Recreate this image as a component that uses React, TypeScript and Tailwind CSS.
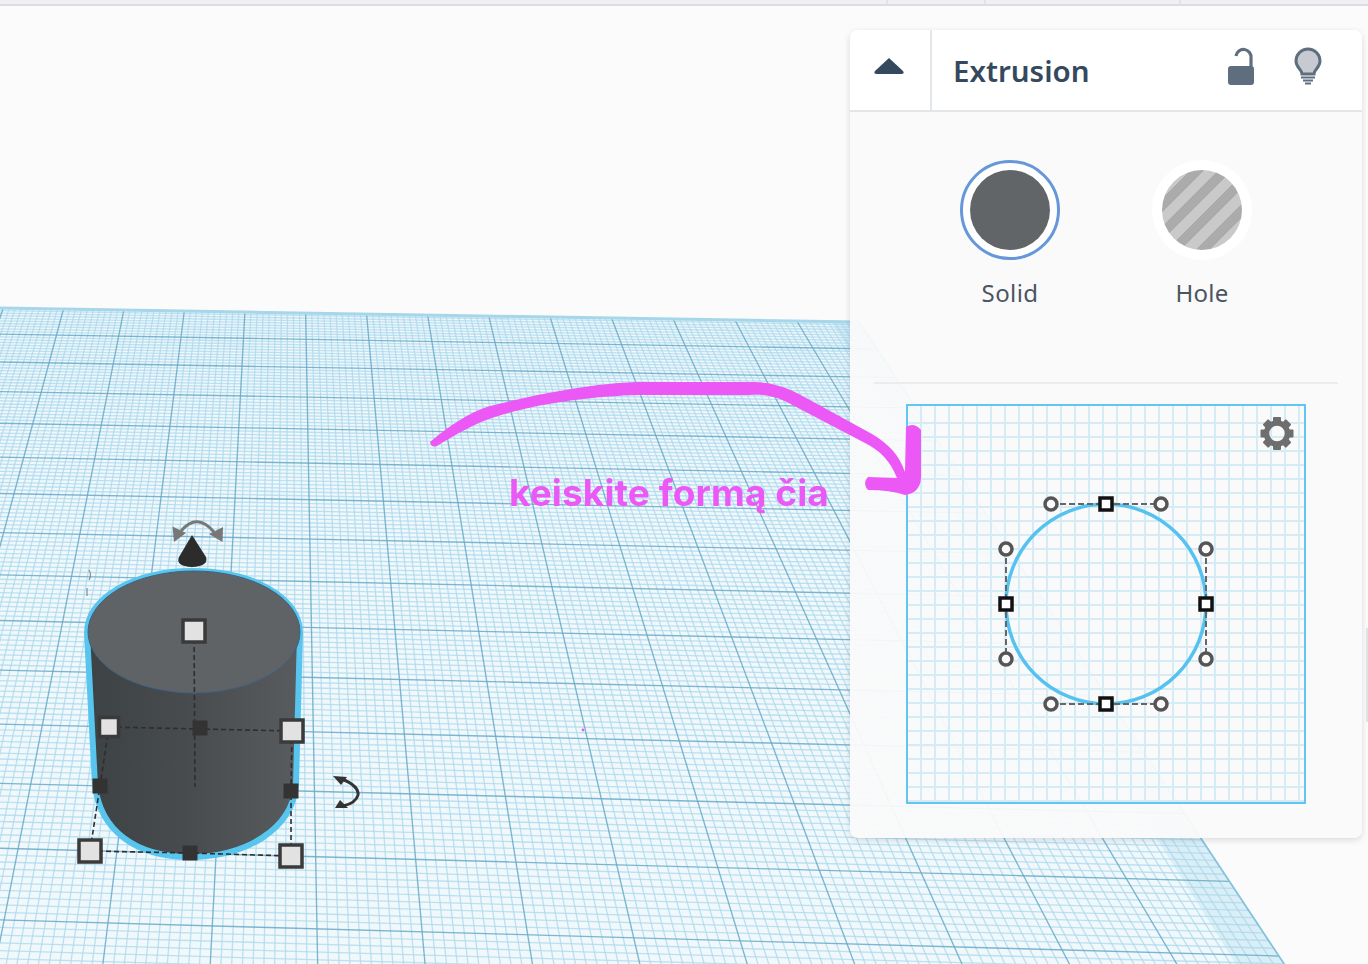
import React from 'react'

// workplane perspective, fitted to the screenshot
const HORIZON = -537
const VP_X = 290
const LEFT_VP = 51500
const EDGE = 851

const depth = (v: number) => 1 / (1.1834e-3 - 3.55e-5 * v) + HORIZON

function vLine(k: number) {
  const x310 = 245 + 60.6 * k
  const s = (x310 - VP_X) / (310 - HORIZON)
  const x1 = (VP_X + s * (308 - HORIZON)) / (1 - s * 0.0163)
  const y1 = 308 + 0.0163 * x1
  return { x1, y1, x2: VP_X + s * (980 - HORIZON), y2: 980 }
}

function hLine(v: number) {
  const y = depth(v)
  const m = (y - HORIZON) / LEFT_VP
  const e = (EDGE - VP_X) / (310 - HORIZON)
  const x2 = (VP_X + e * (y - HORIZON)) / (1 - e * m)
  return { x1: 0, y1: y, x2, y2: y + m * x2 }
}

function Workplane() {
  const minorV: React.ReactNode[] = []
  const majorV: React.ReactNode[] = []
  for (let i = -60; i <= 100; i++) {
    const l = vLine(i / 10)
    if (i % 10 === 0) majorV.push(<line key={i} {...l} />)
    else minorV.push(<line key={i} {...l} />)
  }
  const minorH: React.ReactNode[] = []
  const majorH: React.ReactNode[] = []
  for (let i = 0; i <= 150; i++) {
    const l = hLine(i / 10)
    if (i % 10 === 0) majorH.push(<line key={i} {...l} />)
    else minorH.push(<line key={i} {...l} />)
  }
  const edgeTop = hLine(0)
  const a = vLine(9.55)
  const b = vLine(10)
  return (
    <svg viewBox="0 6 1368 958" className="absolute inset-0 h-full w-full blur-[0.7px]">
      <polygon points={`0,308 ${edgeTop.x2},${edgeTop.y2} ${b.x2},980 0,980`} fill="#f0f8fb" />
      <g stroke="#aedaed" strokeWidth="1.3" strokeOpacity="0.8">
        {minorV}
        {minorH}
      </g>
      <polygon points={`${a.x1},${a.y1} ${b.x1},${b.y1} ${b.x2},980 ${a.x2},980`} fill="#a9d7ea" fillOpacity="0.3" />
      <g stroke="#66a9c8" strokeWidth="1.35" strokeOpacity="0.85">
        {majorV}
        {majorH}
      </g>
      <line {...edgeTop} stroke="#a6d6ea" strokeWidth="3" />
      <line {...b} stroke="#86c6e0" strokeWidth="1.5" />
    </svg>
  )
}

function WhiteHandle({ x, y, size = 22 }: { x: number; y: number; size?: number }) {
  return (
    <rect x={x - size / 2} y={y - size / 2} width={size} height={size} fill="#e2e2e2" stroke="#3a3a3a" strokeWidth="3.5" />
  )
}

function DarkHandle({ x, y }: { x: number; y: number }) {
  return <rect x={x - 7.5} y={y - 7.5} width={15} height={15} fill="#333" />
}

function Cylinder() {
  return (
    <svg viewBox="0 6 1368 958" className="absolute inset-0 h-full w-full blur-[0.6px]">
      <defs>
        <linearGradient id="body" x1="0" x2="1" y1="0" y2="0">
          <stop offset="0" stopColor="#3d4245" />
          <stop offset="0.45" stopColor="#474b4e" />
          <stop offset="1" stopColor="#585c5f" />
        </linearGradient>
      </defs>
      <path
        d="M87,633 C87,597 135,571 193,571 C252,571 300,597 300,633 L296,785 C292,830 245,857 190,857 C135,857 100,830 95,785 Z"
        fill="url(#body)"
        stroke="#58c5ee"
        strokeWidth="6"
      />
      <ellipse cx="194" cy="632" rx="106" ry="61" fill="#5f6366" stroke="#3f6080" strokeWidth="1" />
      <g stroke="#2e2e2e" strokeWidth="1.6" strokeDasharray="5 3" fill="none">
        <path d="M194,631 L195,787" />
        <path d="M109,727 L292,731" />
        <path d="M109,727 L100,786 L90,851" />
        <path d="M292,731 L291,791 L291,856" />
        <path d="M90,851 L190,853 L291,856" />
      </g>
      <WhiteHandle x={194} y={631} />
      <WhiteHandle x={109} y={727} size={19} />
      <WhiteHandle x={292} y={731} />
      <WhiteHandle x={90} y={851} />
      <WhiteHandle x={291} y={856} />
      <DarkHandle x={200} y={728} />
      <DarkHandle x={100} y={786} />
      <DarkHandle x={291} y={791} />
      <DarkHandle x={190} y={853} />
      <path d="M192,535 L206,557 Q209,566 192,567 Q175,566 179,557 Z" fill="#2c2c2c" />
      <path d="M181,531 Q197,512 214,532" fill="none" stroke="#777" strokeWidth="3" />
      <path d="M172.5,526.5 L186,533 L174,542 Z M223,527 L209,534 L222.5,542 Z" fill="#777" />
      <path d="M342,779 Q359,786 358,795 Q356,803 343,806" fill="none" stroke="#333" strokeWidth="3" />
      <path d="M333,776 L347,777 L341,785 Z M335,808 L340,800 L348,808 Z" fill="#333" />
      <path d="M89,570 Q92,575 89,580 M87,588 L87,596" fill="none" stroke="#888" strokeWidth="1.2" />
      <circle cx="583" cy="730" r="1.4" fill="#ec58f5" />
    </svg>
  )
}

function ProfileEditor() {
  const cols = Array.from({ length: 28 }, (_, i) => 921 + i * 14)
  const rows = Array.from({ length: 28 }, (_, i) => 423 + i * 14)
  const anchors = [
    [1106, 504],
    [1006, 604],
    [1206, 604],
    [1106, 704],
  ]
  const knobs = [
    [1051, 504],
    [1161, 504],
    [1006, 549],
    [1206, 549],
    [1006, 659],
    [1206, 659],
    [1051, 704],
    [1161, 704],
  ]
  return (
    <svg viewBox="908 406 396 396" className="block h-full w-full blur-[0.5px]">
      <g stroke="#d5ebf5" strokeWidth="2">
        {cols.map((x) => (
          <line key={x} x1={x} y1="405" x2={x} y2="803" />
        ))}
        {rows.map((y) => (
          <line key={y} x1="905" y1={y} x2="1306" y2={y} />
        ))}
      </g>
      <circle cx="1106" cy="604" r="100" fill="none" stroke="#55c2f0" strokeWidth="3.5" />
      <g stroke="#666" strokeWidth="2" strokeDasharray="6 3">
        <path d="M1051,504 H1161 M1051,704 H1161 M1006,549 V659 M1206,549 V659" />
      </g>
      {knobs.map(([x, y]) => (
        <circle key={`${x}-${y}`} cx={x} cy={y} r="6" fill="#fafafa" stroke="#555" strokeWidth="3.5" />
      ))}
      {anchors.map(([x, y]) => (
        <rect key={`${x}-${y}`} x={x - 6} y={y - 6} width={12} height={12} fill="#fff" stroke="#111" strokeWidth="3.5" />
      ))}
      <g fill="#6e6e6e">
        {[0, 45, 90, 135, 180, 225, 270, 315].map((r) => (
          <rect key={r} x="1273" y="417" width="8" height="7" rx="1" transform={`rotate(${r} 1277 433.5)`} />
        ))}
      </g>
      <circle cx="1277" cy="433.5" r="10.5" fill="none" stroke="#6e6e6e" strokeWidth="5.5" />
    </svg>
  )
}

function SidePanel() {
  return (
    <div className="absolute top-[24px] right-[6px] h-[808px] w-[512px] rounded-lg bg-[#fafafa]/95 shadow-[0_2px_6px_rgba(60,70,90,0.18)] font-['Noto_Sans',sans-serif]">
      <div className="flex h-[82px] rounded-t-lg border-b-2 border-[#e3e7ea] bg-white">
        <div className="flex w-[82px] items-center justify-center border-r-2 border-[#e3e7ea]">
          <svg width="32" height="20" viewBox="0 0 32 20" className="mb-[9px] mr-[2px]">
            <path d="M16,2 L30,15 Q32,18 28,18 L4,18 Q0,18 2,15 Z" fill="#35495e" />
          </svg>
        </div>
        <div className="flex flex-1 items-center pl-[21px] pr-[38px]">
          <span className="pt-[2px] text-[29.5px] leading-none font-semibold text-[#34495e]">Extrusion</span>
          <svg width="36" height="40" viewBox="1222 48 36 40" className="ml-auto mr-[34px] mb-[6px]">
            <rect x="1228" y="67" width="26" height="19" rx="3" fill="#5f6e7e" />
            <path d="M1236,57 A7.5,7.5 0 0 1 1251,59 L1251,68" fill="none" stroke="#5f6e7e" strokeWidth="3.2" />
          </svg>
          <svg width="32" height="42" viewBox="1292 47 32 42" className="mb-[6px]">
            <path
              d="M1302,75 C1302,70 1296,69 1296,62 A12,12 0 1 1 1320,62 C1320,69 1314,70 1314,75 Z"
              fill="#c7cbd1"
              stroke="#5f6e7e"
              strokeWidth="3"
            />
            <path d="M1301,78.5 H1315 M1303,81.5 H1313 M1305,84.5 H1311" stroke="#5f6e7e" strokeWidth="2" />
          </svg>
        </div>
      </div>

      <div className="flex gap-[92px] pl-[110px] pt-[48px]">
        <div className="flex w-[100px] flex-col items-center">
          <div className="flex h-[100px] w-[100px] items-center justify-center rounded-full border-[3px] border-[#6597d9] bg-white">
            <div className="h-[80px] w-[80px] rounded-full bg-[#616567]" />
          </div>
          <span className="mt-[16px] text-[24px] leading-[34px] tracking-[0.4px] text-[#4a5562]">Solid</span>
        </div>
        <div className="flex w-[100px] flex-col items-center">
          <div className="flex h-[100px] w-[100px] items-center justify-center rounded-full bg-white">
            <div className="h-[80px] w-[80px] rounded-full bg-[repeating-linear-gradient(135deg,#ababab_0,#ababab_10px,#c9c9c9_10px,#c9c9c9_20px)]" />
          </div>
          <span className="mt-[16px] text-[24px] leading-[34px] tracking-[0.2px] text-[#4a5562]">Hole</span>
        </div>
      </div>

      <div className="mx-[24px] mt-[72px] h-[2px] bg-[#ececec]" />

      <div className="ml-[56px] mt-[20px] h-[400px] w-[400px] border-2 border-[#63c6f2]">
        <ProfileEditor />
      </div>
    </div>
  )
}

export default function App() {
  return (
    <div className="flex h-[964px] w-[1368px] flex-col overflow-hidden bg-[#fbfbfb]">
      <div className="flex h-[6px] shrink-0 border-b-2 border-[#dcdce4] bg-[#f0f0f4]">
        <div className="w-[888px] border-r-2 border-[#e2e2e8]" />
        <div className="w-[98px] border-r-2 border-[#e2e2e8]" />
        <div className="w-[195px] border-r-2 border-[#e2e2e8]" />
      </div>
      <div className="relative flex-1">
        <Workplane />
        <Cylinder />
        <span className="absolute left-[509px] top-[462px] text-[37px] leading-[50px] font-bold tracking-[0.1px] text-[#ec58f5] font-['Inter',sans-serif] blur-[0.3px]">
          keiskite formą čia
        </span>
        <SidePanel />
        <svg viewBox="0 6 1368 958" className="pointer-events-none absolute inset-0 h-full w-full">
          <path
            d="M430,442 C450,425 470,412 490,406 C530,396 590,383 640,382 L755,382 C780,383 795,392 810,400 L872,434 C890,445 899,455 905,472 L906,427 Q914,422 921,430 L921,478 Q920,493 905,495 Q890,490 868,490 Q862,483 868,477 L897,478 C890,460 880,451 865,443 L800,409 C780,398 770,394 750,395 L640,395 C590,396 530,405 495,417 C475,423 455,435 437,446 Q431,448 430,442 Z"
            fill="#ec58f5"
          />
        </svg>
        <div className="absolute right-0 top-[622px] h-[94px] w-[2px] bg-[#dfe1e6]" />
      </div>
    </div>
  )
}
